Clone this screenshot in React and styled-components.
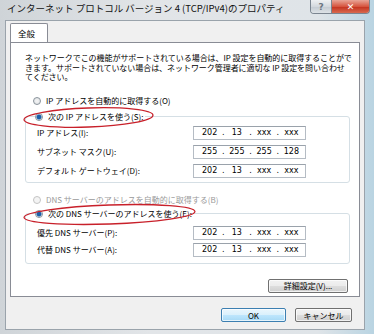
import React from "react";
import styled, { createGlobalStyle } from "styled-components";

const GlobalStyle = createGlobalStyle`
  html, body { margin: 0; padding: 0; }
  body {
    font-family: "Noto Sans CJK JP", "Noto Sans", sans-serif;
    font-size: 8px;
    color: #000;
    background: #fff;
  }
`;

const Window = styled.div`
  width: 374px;
  height: 334px;
  display: flex;
  flex-direction: column;
  background: linear-gradient(to right, #cfd4d8 0%, #e2e5e8 40%, #dfe4e8 85%, #b9d4e2 100%);
  overflow: hidden;
`;

const TitleBar = styled.div`
  height: 20px;
  flex: none;
  display: flex;
  justify-content: space-between;
  align-items: flex-start;
  padding-left: 7px;
`;

const Title = styled.div`
  font-size: 9.5px;
  line-height: 11px;
  margin-top: 3px;
  color: #111;
  white-space: nowrap;
`;

const Caption = styled.div`
  display: flex;
  margin-right: 4px;
  border: 1px solid #7b8590;
  border-top: none;
  border-radius: 0 0 4px 4px;
  overflow: hidden;
`;

const CapButton = styled.div`
  height: 13px;
  width: ${({ w }) => w}px;
  display: flex;
  align-items: center;
  justify-content: center;
  font-family: "DejaVu Sans", sans-serif;
  font-size: 9px;
  font-weight: bold;
  color: ${({ red }) => (red ? "#fff" : "#6a7580")};
  background: ${({ red }) =>
    red
      ? "linear-gradient(#e8a597, #d6553f 50%, #c3301d 51%, #d86a4f)"
      : "linear-gradient(#eef0f2, #d4d9de 50%, #c3cad1 51%, #dde2e6)"};
  & + & { border-left: 1px solid #7b8590; }
`;

const Client = styled.div`
  flex: 1;
  margin: 0 9px 4px 5px;
  background: #f0f0f0;
  border: 1px solid #9aa3ab;
  display: flex;
  flex-direction: column;
  padding: 2px 4px 0 4px;
`;

const TabStrip = styled.div`
  display: flex;
  height: 19px;
`;

const Tab = styled.div`
  width: 38px;
  height: 19px;
  background: #fff;
  border: 1px solid #898c95;
  border-bottom: none;
  border-radius: 2px 2px 0 0;
  display: flex;
  align-items: center;
  padding-left: 7px;
  box-sizing: border-box;
  font-size: 8.5px;
  position: relative;
  z-index: 1;
  margin-bottom: -1px;
`;

const Panel = styled.div`
  height: 255px;
  background: #fff;
  border: 1px solid #898c95;
  box-sizing: border-box;
  padding: 10px 9px 0 14px;
  display: flex;
  flex-direction: column;
`;

const Desc = styled.p`
  margin: 0 0 13px;
  line-height: 9.5px;
  white-space: nowrap;
  letter-spacing: -0.05px;
`;

const RadioRow = styled.label`
  display: flex;
  align-items: center;
  gap: 5px;
  height: 12px;
  margin-left: ${({ indent }) => indent}px;
  white-space: nowrap;
  color: ${({ disabled }) => (disabled ? "#9a9a9a" : "#000")};
  position: relative;
`;

const RadioDot = styled.span`
  width: 8px;
  height: 8px;
  border-radius: 50%;
  box-sizing: border-box;
  border: 1px solid ${({ disabled }) => (disabled ? "#c4c4c4" : "#8a939b")};
  background: ${({ checked, disabled }) =>
    checked
      ? "radial-gradient(circle, #1d5fa8 0 2px, #8fb6dd 2.6px, #eef2f5 3px)"
      : disabled
      ? "#f4f4f4"
      : "radial-gradient(circle, #f6f6f6 0, #dcdfe2 100%)"};
  flex: none;
`;

const Ellipse = styled.svg`
  position: absolute;
  left: -12px;
  top: -4px;
  overflow: visible;
  pointer-events: none;
`;

const Group = styled.fieldset`
  margin: ${({ mt }) => mt}px 0 0;
  padding: ${({ pt }) => pt}px 0 ${({ pb }) => pb}px 11px;
  border: 1px solid #d5dfe5;
  border-radius: 3px;
  display: flex;
  flex-direction: column;
  gap: ${({ gap }) => gap}px;
  min-width: 0;
`;

const Legend = styled.legend`
  padding: 0 2px 0 0;
  margin-left: -2px;
`;

const FieldRow = styled.div`
  display: flex;
  align-items: center;
  justify-content: space-between;
  padding-right: 43px;
  height: 14px;
`;

const FieldLabel = styled.span`
  white-space: nowrap;
`;

const IpBox = styled.div`
  width: 113px;
  height: 14px;
  box-sizing: border-box;
  border: 1px solid #b5bcc4;
  border-top-color: #9aa2ab;
  background: #fff;
  display: flex;
  align-items: center;
  padding: 0 2px 0 4px;
  font-family: "DejaVu Sans", sans-serif;
  font-size: 8px;
`;

const Seg = styled.span`
  flex: 1;
  text-align: center;
`;

const Dot = styled.span`
  width: 4px;
  text-align: center;
`;

const Actions = styled.div`
  display: flex;
  justify-content: flex-end;
  gap: 9px;
  padding-right: ${({ pr }) => pr}px;
  margin-top: ${({ mt }) => mt}px;
`;

const Button = styled.div`
  width: ${({ w }) => w}px;
  height: 14px;
  box-sizing: border-box;
  border: 1px solid ${({ primary }) => (primary ? "#3c7fb1" : "#707070")};
  border-radius: 2px;
  background: ${({ primary }) =>
    primary
      ? "linear-gradient(#eaf6fd, #d9f0fc 50%, #bee6fd 51%, #a7d9f5)"
      : "linear-gradient(#f2f2f2, #ebebeb 50%, #dddddd 51%, #cfcfcf)"};
  box-shadow: inset 0 0 0 1px rgba(255, 255, 255, 0.7);
  display: flex;
  align-items: center;
  justify-content: center;
  white-space: nowrap;
`;

function Radio({ checked, disabled, children, ellipse, indent = 8 }) {
  return (
    <RadioRow disabled={disabled} indent={indent}>
      <RadioDot checked={checked} disabled={disabled} />
      {children}
      {ellipse && (
        <Ellipse width={ellipse} height="21">
          <ellipse
            cx={ellipse / 2}
            cy="10.5"
            rx={ellipse / 2 - 1}
            ry="9.5"
            fill="none"
            stroke="#c8202a"
            strokeWidth="1.3"
            transform={`rotate(-2 ${ellipse / 2} 10.5)`}
          />
        </Ellipse>
      )}
    </RadioRow>
  );
}

function Ip({ parts }) {
  return (
    <IpBox>
      {parts.map((p, i) => (
        <React.Fragment key={i}>
          {i > 0 && <Dot>.</Dot>}
          <Seg>{p}</Seg>
        </React.Fragment>
      ))}
    </IpBox>
  );
}

const mine = ["202", "13", "xxx", "xxx"];

export default function App() {
  return (
    <>
      <GlobalStyle />
      <Window>
        <TitleBar>
          <Title>インターネット プロトコル バージョン 4 (TCP/IPv4)のプロパティ</Title>
          <Caption>
            <CapButton w={20}>?</CapButton>
            <CapButton w={37} red>
              ✕
            </CapButton>
          </Caption>
        </TitleBar>
        <Client>
          <TabStrip>
            <Tab>全般</Tab>
          </TabStrip>
          <Panel>
            <Desc>
              ネットワークでこの機能がサポートされている場合は、IP 設定を自動的に取得することがで
              <br />
              きます。サポートされていない場合は、ネットワーク管理者に適切な IP 設定を問い合わせ
              <br />
              てください。
            </Desc>
            <Radio>IP アドレスを自動的に取得する(O)</Radio>
            <Group mt={4} pt={3} pb={4} gap={5}>
              <Legend>
                <Radio checked ellipse={131} indent={0}>
                  次の IP アドレスを使う(S):
                </Radio>
              </Legend>
              <FieldRow>
                <FieldLabel>IP アドレス(I):</FieldLabel>
                <Ip parts={mine} />
              </FieldRow>
              <FieldRow>
                <FieldLabel>サブネット マスク(U):</FieldLabel>
                <Ip parts={["255", "255", "255", "128"]} />
              </FieldRow>
              <FieldRow>
                <FieldLabel>デフォルト ゲートウェイ(D):</FieldLabel>
                <Ip parts={mine} />
              </FieldRow>
            </Group>
            <div style={{ height: 11 }} />
            <Radio disabled>DNS サーバーのアドレスを自動的に取得する(B)</Radio>
            <Group mt={2} pt={6} pb={6} gap={3}>
              <Legend>
                <Radio checked ellipse={173} indent={0}>
                  次の DNS サーバーのアドレスを使う(E):
                </Radio>
              </Legend>
              <FieldRow>
                <FieldLabel>優先 DNS サーバー(P):</FieldLabel>
                <Ip parts={mine} />
              </FieldRow>
              <FieldRow>
                <FieldLabel>代替 DNS サーバー(A):</FieldLabel>
                <Ip parts={mine} />
              </FieldRow>
            </Group>
            <Actions pr={2} mt={15}>
              <Button w={80}>詳細設定(V)...</Button>
            </Actions>
          </Panel>
          <Actions pr={8} mt={11}>
            <Button w={65} primary>
              OK
            </Button>
            <Button w={57}>キャンセル</Button>
          </Actions>
        </Client>
      </Window>
    </>
  );
}
